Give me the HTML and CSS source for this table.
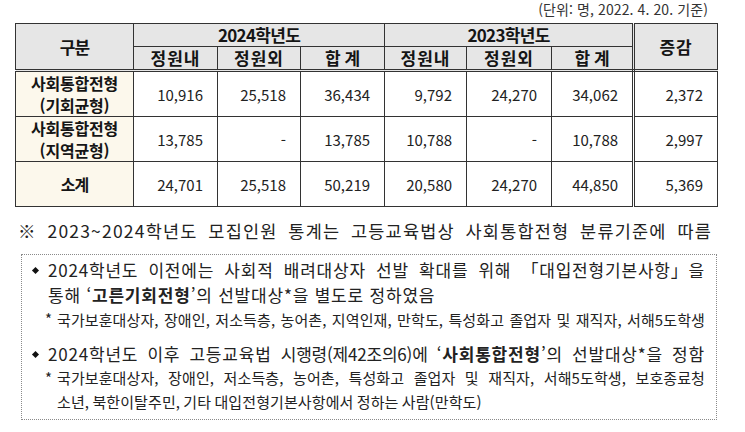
FILE: index.html
```html
<!DOCTYPE html>
<html lang="ko">
<head>
<meta charset="utf-8">
<link rel="stylesheet" href="styles.css">
</head>
<body>
<div class="unit">(단위: 명, 2022. 4. 20. 기준)</div>
<table class="stats">
  <colgroup>
    <col class="c-name"><col class="c84"><col class="c83"><col class="c84"><col class="c82"><col class="c85"><col class="c82"><col class="c84">
  </colgroup>
  <thead>
    <tr class="h1">
      <th rowspan="2" class="tight">구분</th>
      <th colspan="3" class="year">2024학년도</th>
      <th colspan="3" class="year">2023학년도</th>
      <th rowspan="2" class="dbl-left inc">증감</th>
    </tr>
    <tr class="h2">
      <th>정원내</th><th>정원외</th><th class="wide">합계</th>
      <th>정원내</th><th>정원외</th><th class="wide">합계</th>
    </tr>
  </thead>
  <tbody>
    <tr class="r1">
      <th class="name"><span class="nl">사회통합전형</span><span class="nl">(기회균형)</span></th>
      <td>10,916</td><td>25,518</td><td>36,434</td>
      <td>9,792</td><td>24,270</td><td>34,062</td>
      <td class="dbl-left">2,372</td>
    </tr>
    <tr class="r2">
      <th class="name"><span class="nl">사회통합전형</span><span class="nl">(지역균형)</span></th>
      <td>13,785</td><td>-</td><td>13,785</td>
      <td>10,788</td><td>-</td><td>10,788</td>
      <td class="dbl-left">2,997</td>
    </tr>
    <tr class="r3">
      <th class="name sum">소계</th>
      <td>24,701</td><td>25,518</td><td>50,219</td>
      <td>20,580</td><td>24,270</td><td>44,850</td>
      <td class="dbl-left">5,369</td>
    </tr>
  </tbody>
</table>
<p class="note"><span class="w">※</span> 2023~2024학년도 모집인원 통계는 고등교육법상 사회통합전형 분류기준에 따름</p>
<div class="box">
  <div class="item">
    <span class="bullet"></span>
    <div class="body">
      <div class="ln j">2024학년도 이전에는 사회적 배려대상자 선발 확대를 위해 <span class="w">「대입전형기본사항」을</span></div>
      <div class="ln">통해 ‘<b>고른기회전형</b>’의 선발대상*을 별도로 정하였음</div>
    </div>
  </div>
  <div class="sub first">
    <span class="star">*</span>
    <div class="body">
      <div class="sln j">국가보훈대상자, 장애인, 저소득층, 농어촌, 지역인재, 만학도, 특성화고 졸업자 및 재직자, 서해5도학생</div>
    </div>
  </div>
  <div class="item second">
    <span class="bullet"></span>
    <div class="body">
      <div class="ln j">2024학년도 이후 고등교육법 <span class="cond">시행령(제42조의6)에</span> <span class="w">‘<b>사회통합전형</b>’의</span> 선발대상*을 정함</div>
    </div>
  </div>
  <div class="sub">
    <span class="star">*</span>
    <div class="body">
      <div class="sln j">국가보훈대상자, 장애인, 저소득층, 농어촌, 특성화고 졸업자 및 재직자, 서해5도학생, 보호종료청</div>
      <div class="sln">소년, 북한이탈주민, 기타 대입전형기본사항에서 정하는 사람(만학도)</div>
    </div>
  </div>
</div>
</body>
</html>
```
FILE: styles.css
```css
* { box-sizing: border-box; }
html, body { margin: 0; padding: 0; background: #fff; }
body {
  font-family: "Noto Sans CJK KR", "Noto Sans", sans-serif;
  color: #1e1e1e;
  width: 745px;
  height: 432px;
  overflow: hidden;
}
.unit {
  height: 23px;
  font-size: 14px;
  line-height: 19px;
  text-align: right;
  padding-right: 37px;
  color: #333;
  letter-spacing: 0.1px;
}
.stats {
  margin-left: 15px;
  width: 702px;
  table-layout: fixed;
  border-collapse: collapse;
  border: 1px solid #333;
}
.c-name { width: 118px; }
.c84 { width: 84px; }
.c83 { width: 83px; }
.c82 { width: 82px; }
.c85 { width: 85px; }
.stats th, .stats td {
  border: 1px solid #333;
  padding: 0;
}
.stats thead th {
  background: #e6e6e6;
  font-size: 17px;
  font-weight: 700;
  line-height: 20px;
  text-align: center;
  color: #151515;
  letter-spacing: 1px;
}
.stats thead tr.h2 th { border-bottom: 3px double #333; }
.stats thead th.tight { border-bottom: 3px double #333; letter-spacing: -1px; }
.stats thead th.dbl-left { border-bottom: 3px double #333; }
.stats .year { letter-spacing: -0.7px; }
.stats .wide { letter-spacing: 4px; padding-left: 4px; }
.stats .inc { letter-spacing: 1px; }
.stats .h1 { height: 23px; }
.stats .h2 { height: 24px; }
.stats .dbl-left { border-left: 3px double #333; }
.stats tbody th.name {
  background: #fcf8ec;
  font-size: 16px;
  font-weight: 700;
  line-height: 22px;
  letter-spacing: -0.2px;
  text-align: center;
  color: #151515;
}
.nl { display: block; }
.stats tbody th.sum { letter-spacing: -1px; }
.stats td {
  font-size: 15px;
  text-align: right;
  padding-right: 14px;
  color: #222;
}
.stats .r1 { height: 46px; }
.stats .r2 { height: 44px; }
.stats .r3 { height: 45px; }
.w { display: inline-block; }
.note {
  margin: 12px 33px 0 18px;
  font-size: 17.5px;
  line-height: 24px;
  letter-spacing: 1.2px;
  text-align: justify;
  text-align-last: justify;
  color: #222;
}
.box {
  margin: 11px 0 0 21px;
  width: 696px;
  border: 1px dotted #8a8a8a;
  padding: 2px 11px 5px 0;
  color: #222;
}
.item {
  display: grid;
  grid-template-columns: 26px 1fr;
}
.item.second { margin-top: 9px; }
.bullet {
  width: 5px;
  height: 5px;
  background: #111;
  transform: rotate(45deg);
  margin: 11px 0 0 11px;
}
.ln {
  font-size: 17px;
  line-height: 25px;
  letter-spacing: 0.8px;
}
.cond { letter-spacing: -0.2px; }
.j { text-align: justify; text-align-last: justify; }
.ln b, .sln b { font-weight: 700; }
.sub {
  display: grid;
  grid-template-columns: 12px 1fr;
  padding-left: 23px;
}
.sub.first .sln { line-height: 25px; }
.star {
  font-size: 15px;
  line-height: 24px;
}
.sln {
  font-size: 15px;
  line-height: 24px;
  letter-spacing: 0.1px;
  word-spacing: -1px;
}
```
